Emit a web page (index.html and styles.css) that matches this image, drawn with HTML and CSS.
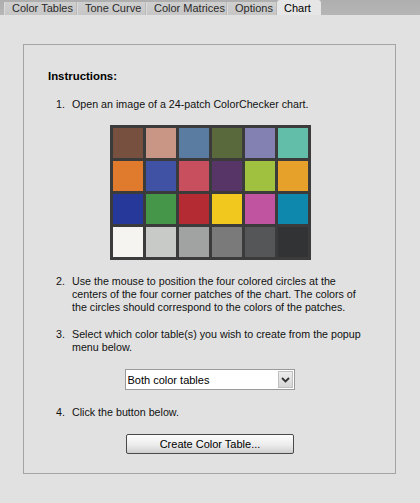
FILE: index.html
```html
<!DOCTYPE html>
<html>
<head>
<meta charset="utf-8">
<link rel="stylesheet" href="styles.css">
</head>
<body>
<div class="tabbar">
  <div class="tab t1">Color Tables</div>
  <div class="tab t2">Tone Curve</div>
  <div class="tab t3">Color Matrices</div>
  <div class="tab t4">Options</div>
  <div class="tab t5 active">Chart</div>
</div>
<div class="panel">
  <div class="heading">Instructions:</div>
  <div class="item item1"><span class="num">1.</span><span class="txt">Open an image of a 24-patch ColorChecker chart.</span></div>
  <div class="chart">
    <div class="p" style="background:#77503f"></div>
    <div class="p" style="background:#c99584"></div>
    <div class="p" style="background:#5a7ca0"></div>
    <div class="p" style="background:#59693c"></div>
    <div class="p" style="background:#8380b2"></div>
    <div class="p" style="background:#62bea9"></div>
    <div class="p" style="background:#e07b2d"></div>
    <div class="p" style="background:#3f52a4"></div>
    <div class="p" style="background:#c84f5e"></div>
    <div class="p" style="background:#573566"></div>
    <div class="p" style="background:#a0c03f"></div>
    <div class="p" style="background:#e6a12a"></div>
    <div class="p" style="background:#263899"></div>
    <div class="p" style="background:#46964a"></div>
    <div class="p" style="background:#b42b33"></div>
    <div class="p" style="background:#f1c81d"></div>
    <div class="p" style="background:#c054a0"></div>
    <div class="p" style="background:#0f88ad"></div>
    <div class="p" style="background:#f6f4f0"></div>
    <div class="p" style="background:#c8cac8"></div>
    <div class="p" style="background:#a1a3a2"></div>
    <div class="p" style="background:#7a7a7a"></div>
    <div class="p" style="background:#545658"></div>
    <div class="p" style="background:#323334"></div>
  </div>
  <div class="item item2"><span class="num">2.</span><span class="txt">Use the mouse to position the four colored circles at the<br>centers of the four corner patches of the chart. The colors of<br>the circles should correspond to the colors of the patches.</span></div>
  <div class="item item3"><span class="num">3.</span><span class="txt">Select which color table(s) you wish to create from the popup<br>menu below.</span></div>
  <div class="select">
    <span class="sel-text">Both color tables</span>
    <span class="sel-btn"><svg width="9" height="6" viewBox="0 0 9 6"><path d="M1 1 L4.5 4.5 L8 1" fill="none" stroke="#333" stroke-width="1.8"/></svg></span>
  </div>
  <div class="item item4"><span class="num">4.</span><span class="txt">Click the button below.</span></div>
  <div class="button">Create Color Table...</div>
</div>
</body>
</html>
```
FILE: styles.css
```css
html, body {
  margin: 0;
  padding: 0;
}
body {
  background: #e1e1e1;
  font-family: "Liberation Sans", Arial, sans-serif;
  font-size: 10.7px;
  color: #111;
  width: 420px;
  height: 503px;
  overflow: hidden;
}
.tabbar {
  height: 15px;
  background: linear-gradient(#aeaeae, #b6b6b6);
  display: flex;
  align-items: flex-end;
  padding-left: 4px;
  box-sizing: border-box;
  font-size: 11px;
}
.tab {
  height: 13px;
  line-height: 13px;
  box-sizing: border-box;
  background: linear-gradient(#cfcfcf, #c6c6c6);
  border-right: 1px solid #b9b9b9;
  border-left: 1px solid #dadada;
  color: #2a2a2a;
  padding-left: 7px;
  white-space: nowrap;
}
.t1 { width: 73px; }
.t2 { width: 69px; }
.t3 { width: 81px; }
.t4 { width: 50px; }
.t5 { width: 44px; }
.tab.active {
  height: 15px;
  background: #e6e6e6;
  border: none;
  border-radius: 3px 3px 0 0;
  line-height: 16px;
  color: #000;
}
.panel {
  margin: 29px 0 0 23px;
  width: 373px;
  height: 430px;
  box-sizing: border-box;
  border: 1px solid #a4a4a4;
  display: flex;
  flex-direction: column;
  padding-top: 25px;
}
.heading {
  font-weight: bold;
  font-size: 11.4px;
  line-height: 13px;
  height: 13px;
  margin-left: 24px;
  color: #000;
}
.item {
  display: flex;
  line-height: 13px;
  margin-left: 32px;
}
.num {
  width: 16px;
  flex: none;
}
.txt {
  white-space: nowrap;
}
.item1 { margin-top: 15px; }
.chart {
  align-self: center;
  margin-top: 14px;
  margin-left: 1px;
  background: #3b3b3b;
  padding: 3px;
  display: grid;
  grid-template-columns: repeat(6, 30px);
  grid-template-rows: repeat(4, 30px);
  gap: 3px;
}
.item2 { margin-top: 15px; }
.item3 { margin-top: 14px; }
.select {
  align-self: center;
  margin-top: 15px;
  width: 170px;
  height: 21px;
  box-sizing: border-box;
  border: 1px solid #9a9a9a;
  background: #fff;
  display: flex;
  align-items: center;
  justify-content: space-between;
  padding: 0 1px 0 2px;
  font-size: 11px;
}
.sel-text {
  color: #000;
}
.sel-btn {
  width: 15px;
  height: 17px;
  box-sizing: border-box;
  background: linear-gradient(#ececec, #d6d6d6);
  border: 1px solid #c0c0c0;
  display: flex;
  align-items: center;
  justify-content: center;
}
.item4 { margin-top: 16px; }
.button {
  align-self: center;
  margin-top: 15px;
  margin-left: 1px;
  width: 168px;
  height: 20px;
  box-sizing: border-box;
  border: 1px solid #4a4a4a;
  border-radius: 2px;
  background: linear-gradient(#fdfdfd, #ececec 55%, #cfcfcf);
  text-align: center;
  line-height: 18px;
  color: #000;
  font-size: 11px;
}
```
